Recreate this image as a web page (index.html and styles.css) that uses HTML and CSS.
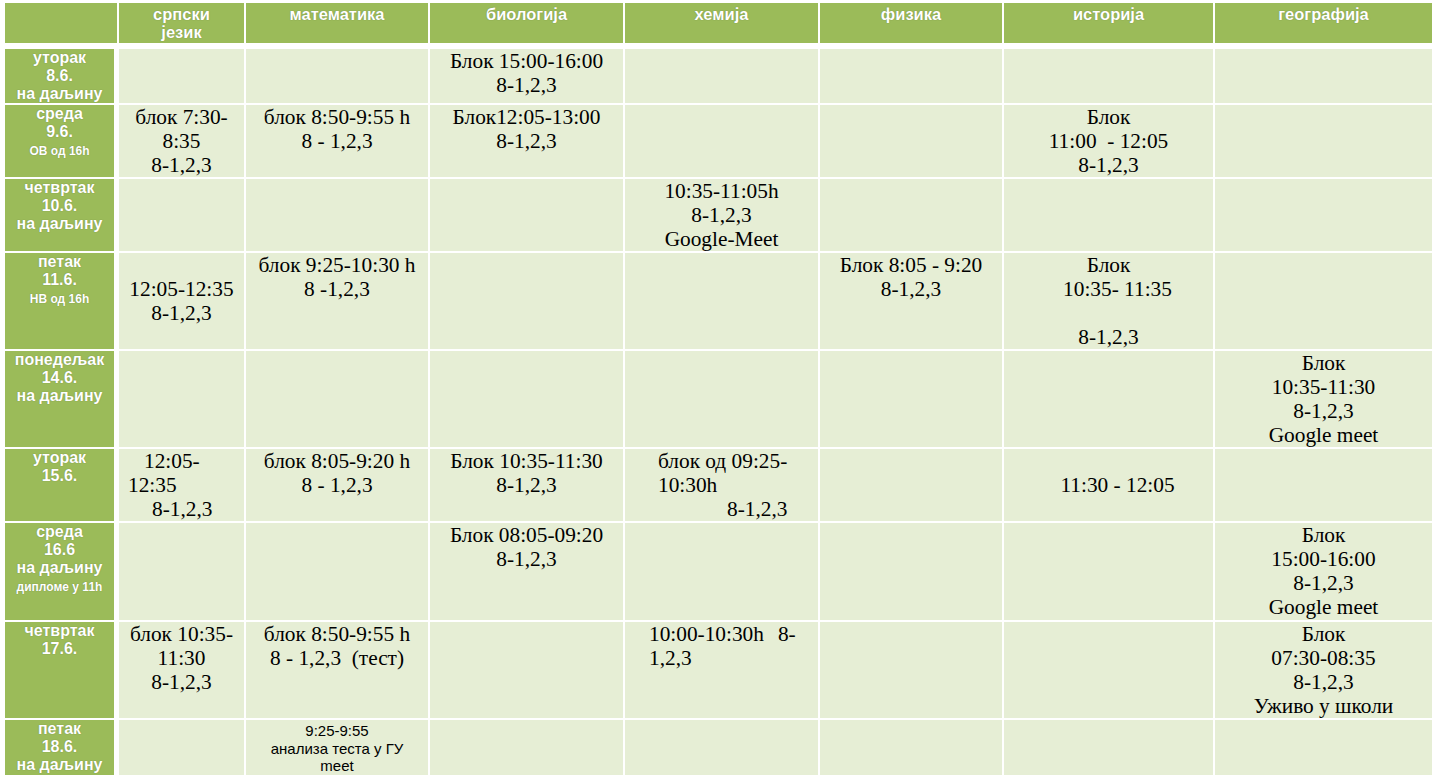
FILE: index.html
```html
<!DOCTYPE html>
<html lang="sr">
<head>
<meta charset="utf-8">
<title>Распоред</title>
<link rel="stylesheet" href="styles.css">
</head>
<body>
<table class="schedule">
  <colgroup>
    <col class="c0"><col class="c1"><col class="c2"><col class="c3"><col class="c4"><col class="c5"><col class="c6"><col class="c7">
  </colgroup>
  <thead>
    <tr class="head">
      <th></th>
      <th>српски<br>језик</th>
      <th>математика</th>
      <th>биологија</th>
      <th>хемија</th>
      <th>физика</th>
      <th>историја</th>
      <th>географија</th>
    </tr>
  </thead>
  <tbody>
    <tr class="h53">
      <th class="day">уторак<br>8.6.<br>на даљину</th>
      <td></td><td></td>
      <td>Блок 15:00-16:00<br>8-1,2,3</td>
      <td></td><td></td><td></td><td></td>
    </tr>
    <tr class="h72">
      <th class="day">среда<br>9.6.<br><span class="small">ОВ од 16h</span></th>
      <td>блок 7:30-<br>8:35<br>8-1,2,3</td>
      <td>блок 8:50-9:55 h<br>8 - 1,2,3</td>
      <td>Блок12:05-13:00<br>8-1,2,3</td>
      <td></td><td></td>
      <td>Блок<br>11:00 &nbsp;- 12:05<br>8-1,2,3</td>
      <td></td>
    </tr>
    <tr class="h72">
      <th class="day">четвртак<br>10.6.<br>на даљину</th>
      <td></td><td></td><td></td>
      <td>10:35-11:05h<br>8-1,2,3<br>Google-Meet</td>
      <td></td><td></td><td></td>
    </tr>
    <tr class="h96">
      <th class="day">петак<br>11.6.<br><span class="small">НВ од 16h</span></th>
      <td class="mid">12:05-12:35<br>8-1,2,3</td>
      <td>блок 9:25-10:30 h<br>8 -1,2,3</td>
      <td></td><td></td>
      <td>Блок 8:05 - 9:20<br>8-1,2,3</td>
      <td>Блок<br><span class="shift">10:35- 11:35</span><br>&nbsp;<br>8-1,2,3</td>
      <td></td>
    </tr>
    <tr class="h96">
      <th class="day">понедељак<br>14.6.<br>на даљину</th>
      <td></td><td></td><td></td><td></td><td></td><td></td>
      <td>Блок<br>10:35-11:30<br>8-1,2,3<br>Google meet</td>
    </tr>
    <tr class="h72">
      <th class="day">уторак<br>15.6.</th>
      <td class="left pl9"><span class="in16">12:05-</span><br>12:35<br><span class="in24">8-1,2,3</span></td>
      <td>блок 8:05-9:20 h<br>8 - 1,2,3</td>
      <td>Блок 10:35-11:30<br>8-1,2,3</td>
      <td class="left pl33">блок од 09:25-<br>10:30h<br><span class="in69">8-1,2,3</span></td>
      <td></td>
      <td class="mid"><span class="shift">11:30 - 12:05</span></td>
      <td></td>
    </tr>
    <tr class="h97">
      <th class="day">среда<br>16.6<br>на даљину<br><span class="small">дипломе у 11h</span></th>
      <td></td><td></td>
      <td>Блок 08:05-09:20<br>8-1,2,3</td>
      <td></td><td></td><td></td>
      <td>Блок<br>15:00-16:00<br>8-1,2,3<br>Google meet</td>
    </tr>
    <tr class="h96">
      <th class="day">четвртак<br>17.6.</th>
      <td>блок 10:35-<br>11:30<br>8-1,2,3</td>
      <td>блок 8:50-9:55 h<br>8 - 1,2,3 &nbsp;(тест)</td>
      <td></td>
      <td class="left pl24">10:00-10:30h<span class="in14">8-</span><br>1,2,3</td>
      <td></td><td></td>
      <td>Блок<br>07:30-08:35<br>8-1,2,3<br>Уживо у школи</td>
    </tr>
    <tr class="h72">
      <th class="day">петак<br>18.6.<br>на даљину</th>
      <td></td>
      <td class="note">9:25-9:55<br>анализа теста у ГУ<br>meet</td>
      <td></td><td></td><td></td><td></td><td></td>
    </tr>
  </tbody>
</table>
</body>
</html>
```

FILE: styles.css
```css
html, body {
  margin: 0;
  padding: 0;
  background: #ffffff;
}

.schedule {
  border-collapse: separate;
  border-spacing: 2px;
  table-layout: fixed;
  width: 1431px;
  margin: 1px 0 0 3px;
}

.c0 { width: 112px; }
.c1 { width: 125px; }
.c2 { width: 182px; }
.c3 { width: 193px; }
.c4 { width: 193px; }
.c5 { width: 182px; }
.c6 { width: 209px; }
.c7 { width: 217px; }

.schedule th,
.schedule td {
  box-sizing: border-box;
  padding: 0;
}

.head { height: 44px; }
.h53 { height: 53px; }
.h72 { height: 72px; }
.h96 { height: 96px; }
.h97 { height: 97px; }

.head th {
  background: #9bbb59;
  border-bottom: 4px solid #ffffff;
  color: #ffffff;
  font-family: "Liberation Sans", Arial, sans-serif;
  font-weight: bold;
  font-size: 16.5px;
  line-height: 18px;
  text-align: center;
  vertical-align: top;
  padding-top: 2px;
  text-shadow: 0 0 1px rgba(70, 85, 40, 0.6);
}

.day {
  background: #9bbb59;
  border-right: 3px solid #ffffff;
  color: #ffffff;
  font-family: "Liberation Sans", Arial, sans-serif;
  font-weight: bold;
  font-size: 16px;
  line-height: 18px;
  text-align: center;
  vertical-align: top;
  text-shadow: 0 0 1px rgba(70, 85, 40, 0.6);
}

.small {
  font-size: 12px;
  line-height: 14px;
  display: inline-block;
}

.schedule td {
  background: #e6eed5;
  color: #000000;
  font-family: "Liberation Serif", "Times New Roman", serif;
  font-size: 21.33px;
  line-height: 24px;
  text-align: center;
  vertical-align: top;
  white-space: nowrap;
}

.schedule td.mid { vertical-align: middle; }
.schedule td.left { text-align: left; }
.schedule td.pl9 { padding-left: 9px; }
.schedule td.pl24 { padding-left: 24px; }
.schedule td.pl33 { padding-left: 33px; }

.in14 { padding-left: 14px; }
.in16 { padding-left: 16px; }
.in24 { padding-left: 24px; }
.in69 { padding-left: 69px; }
.shift { padding-left: 18px; }

.schedule td.note {
  font-family: "Liberation Sans", Arial, sans-serif;
  font-size: 15px;
  line-height: 17.5px;
  padding-top: 2px;
}
```
